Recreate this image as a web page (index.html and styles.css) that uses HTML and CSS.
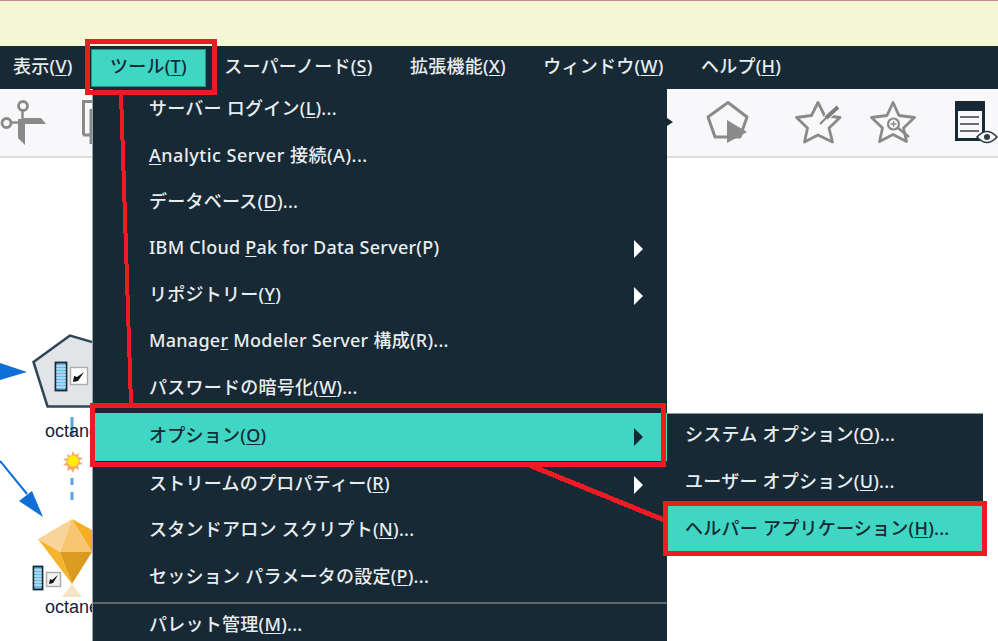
FILE: index.html
```html
<!DOCTYPE html>
<html lang="ja">
<head>
<meta charset="utf-8">
<title>ツール</title>
<link rel="stylesheet" href="styles.css">
</head>
<body>
<div class="app">
  <div class="banner"></div>
  <nav class="menubar">
    <span class="top-item">表示(<u>V</u>)</span>
    <span class="top-item active">ツール(<u>T</u>)</span>
    <span class="top-item">スーパーノード(<u>S</u>)</span>
    <span class="top-item">拡張機能(<u>X</u>)</span>
    <span class="top-item">ウィンドウ(<u>W</u>)</span>
    <span class="top-item">ヘルプ(<u>H</u>)</span>
  </nav>
  <div class="toolbar"></div>
  <div class="canvas"></div>

  <svg class="tool-icons" width="998" height="68" viewBox="0 89 998 68">
    <g fill="none" stroke="#8a8a8a">
      <circle cx="23" cy="106" r="4.500" stroke-width="2.800"/>
      <circle cx="6.500" cy="123" r="4.500" stroke-width="2.800"/>
      <path d="M11 122.500h12M22.500 111v9" stroke-width="2.500"/>
      <path d="M83.500 135v-33.500h9M91 144v-35" stroke-width="3"/>
      <path d="M83 135h9" stroke-width="3"/>
      <path d="M728 102.500l19 14.500-7 20h-25l-7-20z" stroke-linejoin="round" stroke-width="3"/>
      <path d="M818 102.500l6.500 13 15.500 2-11 10.500 3.500 14-14.500-7-13.500 7 3-14-11-10.500 15-2z" stroke-linejoin="round" stroke-width="2.800"/>
      <path d="M893 102.500l6 13 15.500 2-11 10.500 3 13.500-13.500-7-13.500 7 3-13.500-11-10.500 15.500-2z" stroke-linejoin="round" stroke-width="2.800"/>
      <circle cx="893.500" cy="124" r="5.500" stroke-width="2.200"/>
      <path d="M898 128l11 9" stroke-width="2.600"/>
      <path d="M890.500 124h6M893.500 121v6" stroke-width="1.300"/>
    </g>
    <path fill="#8a8a8a" d="M18 119h7v26l-7-7z"/>
    <path fill="#8a8a8a" d="M24 118h17l5 6H24z"/>
    <path fill="#8a8a8a" d="M727 120l20 12-20 11z"/>
    <path stroke="#f8f8fb" stroke-width="6" d="M839 106l-13 12"/>
    <path stroke="#7e7e7e" stroke-width="4" d="M838 107l-12 11"/>
    <path stroke="#7e7e7e" stroke-width="1.800" d="M826 118l-6 6"/>
    <path fill="#172934" d="M667 118l6 4-6 4z"/>
    <path fill="#172934" d="M955 101h30v40h-30z"/>
    <path fill="#f8f8fb" d="M958 111h24v27h-24z"/>
    <path stroke="#3a3f44" stroke-width="1.500" d="M960 117h19M960 124h19M960 131h19"/>
    <path fill="#f8f8fb" stroke="#2d3a42" stroke-width="1.600" d="M977 137q10-11 20 0q-10 11-20 0z"/>
    <circle cx="987" cy="137" r="3" fill="#2d3a42"/>
  </svg>

  <svg class="diagram" width="92" height="552" viewBox="0 89 92 552">
    <path fill="#0f6fd6" d="M0 363l27 9-27 8z"/>
    <path stroke="#0f6fd6" stroke-width="2" d="M0 461l27 33"/>
    <path fill="#0f6fd6" d="M43 517L19 501l13-10z"/>
    <path fill="#e2e4e8" stroke="#2f4656" stroke-width="2.500" d="M70 335.500l-36.500 26.500 14 44.500h60v-60z"/>
    <rect x="55.500" y="362.500" width="11" height="28" fill="#6fbce6" stroke="#172934" stroke-width="1.800"/>
    <path stroke="#e6f3fb" stroke-width="1" d="M56 366h10M56 369h10M56 372h10M56 375h10M56 378h10M56 381h10M56 384h10M56 387h10"/>
    <rect x="70.500" y="367.500" width="17" height="17" fill="#fff" stroke="#aaa" stroke-width="1.400"/>
    <path fill="#111" d="M84 372l-6 9-5 1 1-6 3 1z"/>
    <path stroke="#5aa1e6" stroke-width="3" d="M72 417v20M72 478v7M72 492v8"/>
    <path fill="#f7a86c" d="M73 451l2 4 4-2-1 4 5 1-4 3 4 3-5 1 1 5-4-2-2 5-2-4-4 2 1-5-5-1 4-3-4-3 5-1-1-4 4 2z"/>
    <circle cx="73" cy="461" r="5.500" fill="#ffee00"/>
    <path fill="#f9d49a" d="M72 519L38 539l22 13z"/>
    <path fill="#f8c572" d="M72 519l-12 33h32z"/>
    <path fill="#f3ae22" d="M72 519l20 33 18-12z"/>
    <path fill="#f4b52b" d="M38 539l34 45-12-32z"/>
    <path fill="#db9a20" d="M60 552l12 32 20-32z"/>
    <path fill="#f7e3c6" d="M72 584l-10 13h20z"/>
    <rect x="33.500" y="566.500" width="9" height="23" fill="#6fbce6" stroke="#172934" stroke-width="1.800"/>
    <path stroke="#e6f3fb" stroke-width="1" d="M34 570h8M34 573h8M34 576h8M34 579h8M34 582h8M34 585h8"/>
    <rect x="46.500" y="572.500" width="14" height="14" fill="#f2f2f2" stroke="#aaa" stroke-width="1.400"/>
    <path fill="#111" d="M58 575l-5 8-4 1 1-5 2 1z"/>
  </svg>
  <span class="node-label first">octane</span>
  <span class="node-label second">octane</span>

  <div class="menu main-menu">
    <div class="item">サーバー ログイン(<u>L</u>)...</div>
    <div class="item wide-latin"><u>A</u>nalytic Server 接続(A)...</div>
    <div class="item">データベース(<u>D</u>)...</div>
    <div class="item sub">IBM Cloud <u>P</u>ak for Data Server(P)</div>
    <div class="item sub">リポジトリー(<u>Y</u>)</div>
    <div class="item">Manage<u>r</u> Modeler Server 構成(R)...</div>
    <div class="item">パスワードの暗号化(<u>W</u>)...</div>
    <div class="item sub selected">オプション(<u>O</u>)</div>
    <div class="item sub">ストリームのプロパティー(<u>R</u>)</div>
    <div class="item">スタンドアロン スクリプト(<u>N</u>)...</div>
    <div class="item">セッション パラメータの設定(<u>P</u>)...</div>
    <div class="separator"></div>
    <div class="item">パレット管理(<u>M</u>)...</div>
  </div>

  <div class="menu sub-menu">
    <div class="item">システム オプション(<u>O</u>)...</div>
    <div class="item">ユーザー オプション(<u>U</u>)...</div>
    <div class="item selected">ヘルパー アプリケーション(<u>H</u>)...</div>
  </div>

  <div class="mark mark-tools"></div>
  <div class="mark mark-options"></div>
  <div class="mark mark-helper"></div>
  <svg class="connectors" width="998" height="641" viewBox="0 0 998 641" shape-rendering="crispEdges">
    <path stroke="#ed1c24" stroke-width="4" fill="none" d="M121 93l10 311"/>
    <path stroke="#ed1c24" stroke-width="5" fill="none" d="M529 465l135 55"/>
  </svg>
</div>
</body>
</html>
```
FILE: styles.css
```css
* { box-sizing: border-box; }
html, body { margin: 0; padding: 0; }
body {
  width: 998px;
  height: 641px;
  overflow: hidden;
  font-family: "Noto Sans", "Noto Sans CJK JP", sans-serif;
  font-size: 18px;
  font-weight: 500;
  line-height: 24px;
  letter-spacing: 0.25px;
  background: #fff;
}
u { text-underline-offset: 2px; text-decoration-thickness: 1px; }
.app { position: relative; width: 998px; height: 641px; overflow: hidden; display: flex; flex-direction: column; }
.banner { height: 46px; flex: none; background: #f5f6d5; border-top: 1px solid #c08a8f; }
.menubar { height: 43px; flex: none; display: flex; align-items: center; background: #172934; color: #e8edf0; }
.top-item { display: flex; align-items: center; height: 38px; padding: 0 18.700px 4px; white-space: pre; }
.top-item:first-child { padding-left: 13px; }
.top-item.active { background: #3fd7c3; color: #172934; border: 1px solid #2c8d86; padding: 0 17.700px 4px; }
.toolbar { height: 69px; flex: none; background: #f8f8fb; border-bottom: 2px solid #dcdcdc; }
.canvas { flex: 1; background: #fff; }
.tool-icons { position: absolute; left: 0; top: 89px; }
.diagram { position: absolute; left: 0; top: 89px; }
.node-label { position: absolute; left: 45px; font-family: "Liberation Sans", sans-serif; font-size: 18px; font-weight: 400; letter-spacing: 0; color: #1a1a3a; white-space: pre; line-height: 22px; }
.node-label.first { top: 420px; }
.node-label.second { top: 596px; }
.menu { position: absolute; background: #172934; color: #e8edf0; white-space: pre; }
.main-menu { left: 92px; top: 89px; width: 575px; height: 552px; display: flex; flex-direction: column; border-left: 1px solid #9aa4a8; }
.main-menu .item { height: 46.400px; padding: 0 0 4px 56px; }
.main-menu .item:first-child { margin-top: -2px; }
.item { display: flex; align-items: center; position: relative; flex: none; }
.wide-latin { letter-spacing: 0.5px; }
.item.sub::after {
  content: "";
  position: absolute;
  left: 541px;
  top: 50%;
  margin-top: -9px;
  border-left: 9px solid #fff;
  border-top: 9px solid transparent;
  border-bottom: 9px solid transparent;
}
.item.selected { background: #3fd7c3; color: #172934; }
.item.selected.sub::after { border-left-color: #172934; }
.main-menu .item.selected { height: 48px; margin-top: 1px; margin-bottom: 1px; }
.separator { height: 2px; margin-top: 1px; background: #5f676c; flex: none; }
.main-menu .separator + .item { margin-top: -1px; }
.sub-menu { left: 667px; top: 413px; width: 316px; height: 140px; border-top: 1px solid #8f979c; display: flex; flex-direction: column; }
.sub-menu .item { height: 46.500px; padding: 0 0 4px 18px; }
.sub-menu .item:first-child { margin-top: -1px; }
.sub-menu .item.selected { padding-bottom: 2px; }
.mark { position: absolute; border: 5px solid #ed1c24; }
.mark-tools { left: 85px; top: 39px; width: 132px; height: 56px; }
.mark-options { left: 90px; top: 403px; width: 576px; height: 64px; }
.mark-helper { left: 663px; top: 501px; width: 324px; height: 55px; }
.connectors { position: absolute; left: 0; top: 0; pointer-events: none; }
```
